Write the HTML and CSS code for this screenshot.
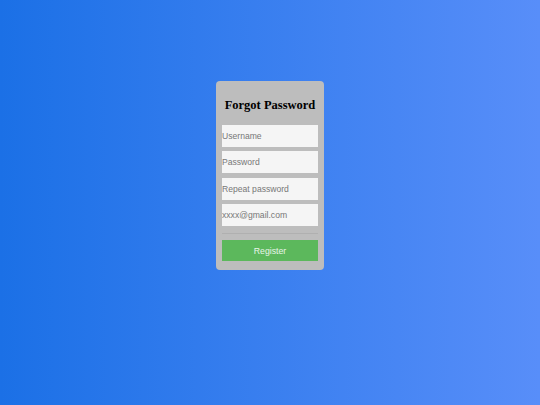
FILE: index.html
```
<!DOCTYPE html>
<html>
<head>
<meta charset="utf-8">
<link rel="stylesheet" href="styles.css">
</head>
<body>
<div class="page">
  <form class="card">
    <h2 class="title">Forgot Password</h2>
    <input class="field" type="text" placeholder="Username">
    <input class="field" type="password" placeholder="Password">
    <input class="field" type="password" placeholder="Repeat password">
    <input class="field" type="email" placeholder="xxxx@gmail.com">
    <hr class="rule">
    <button class="btn" type="button">Register</button>
  </form>
</div>
</body>
</html>
```
FILE: styles.css
```
html, body {
  margin: 0;
  padding: 0;
  height: 100%;
}
.page {
  width: 540px;
  height: 405px;
  background: linear-gradient(to right, #1b70e6, #588ef9);
  display: flex;
  justify-content: center;
  align-items: flex-start;
  padding-top: 81px;
  box-sizing: border-box;
  font-family: "Liberation Sans", Arial, sans-serif;
}
.card {
  width: 108px;
  box-sizing: border-box;
  background: #bdbdbd;
  border-radius: 4px;
  padding: 16px 6px 9px;
  display: flex;
  flex-direction: column;
}
.title {
  font-family: "Liberation Serif", "Times New Roman", serif;
  font-weight: bold;
  font-size: 12.5px;
  line-height: 16px;
  margin: 0 0 12px;
  text-align: center;
  color: #000;
  white-space: nowrap;
}
.field {
  height: 22px;
  margin: 0 0 4.4px;
  padding: 0;
  border: none;
  outline: none;
  background: #f5f5f5;
  font-family: "Liberation Sans", Arial, sans-serif;
  font-size: 8.6px;
  color: #333;
  box-sizing: border-box;
  width: 96px;
}
.field::placeholder {
  color: #777;
}
.rule {
  border: none;
  border-top: 1px solid #b0b0b0;
  margin: 2px 0 6px;
  height: 0;
}
.btn {
  height: 21px;
  background: #5cb85c;
  border: none;
  color: #e8f5e8;
  font-family: "Liberation Sans", Arial, sans-serif;
  font-size: 8.7px;
  padding: 1px 0 0;
  width: 96px;
}
```
